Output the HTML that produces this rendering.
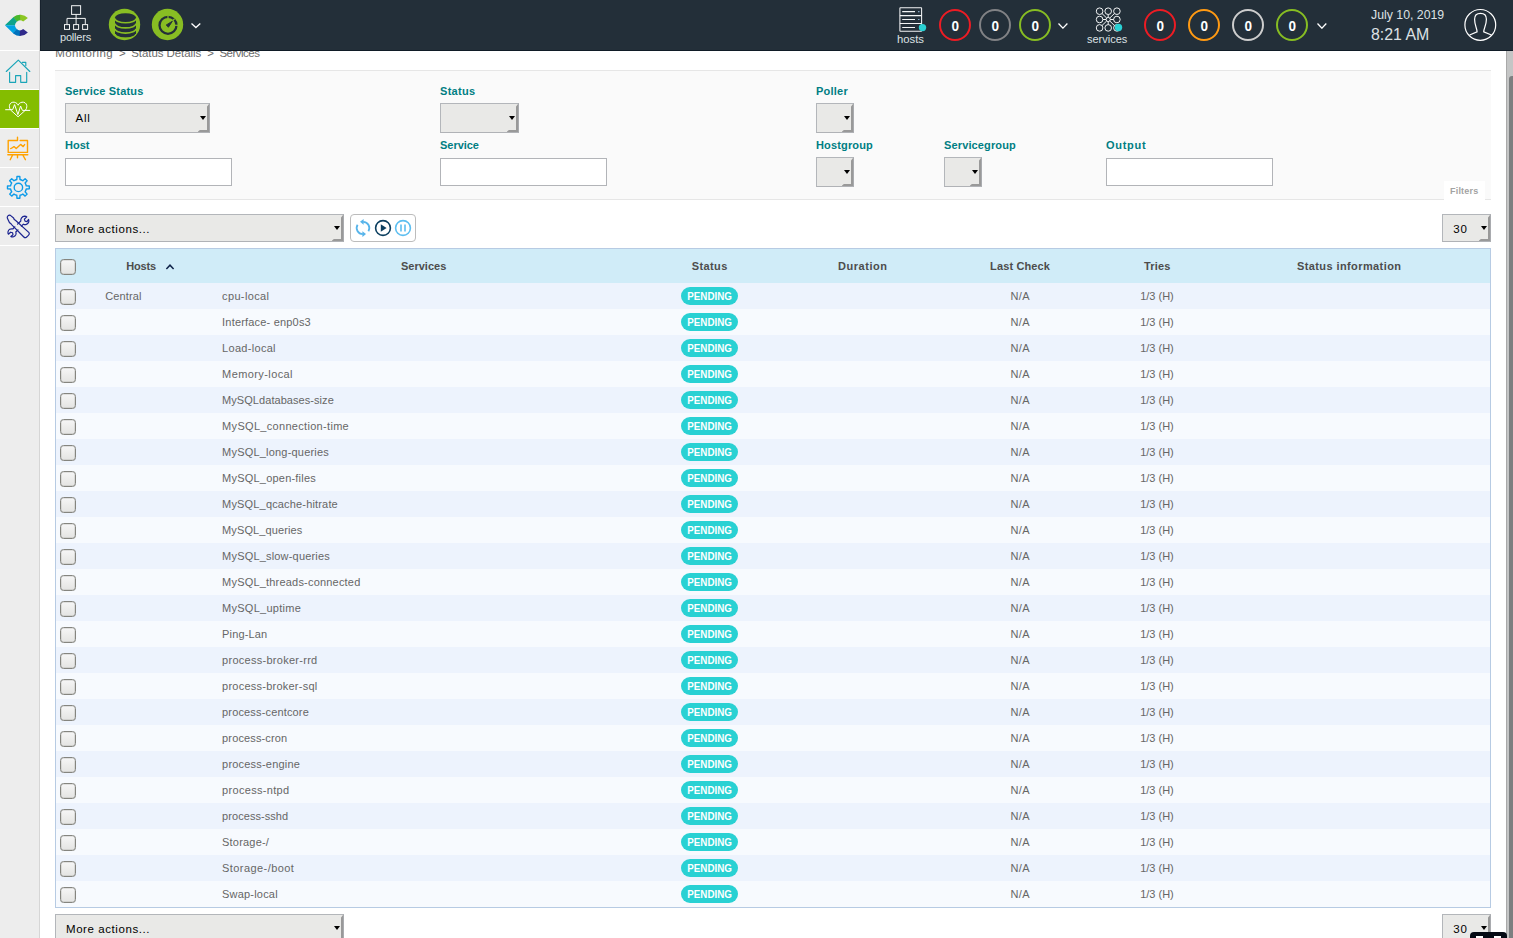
<!DOCTYPE html>
<html><head><meta charset="utf-8"><title>Centreon</title>
<style>
*{box-sizing:border-box;margin:0;padding:0}
html,body{width:1513px;height:938px;overflow:hidden;background:#fff;font-family:"Liberation Sans",sans-serif;font-size:11px;color:#666}
.abs{position:absolute}
#side{position:absolute;left:0;top:0;width:40px;height:938px;background:#ededed;border-right:1px solid #d6d6d6}
#side .sep{position:absolute;left:0;width:39px;height:1px;background:#fff}
#side .act{position:absolute;left:0;top:90px;width:39px;height:38px;background:#84bd00}
#top{position:absolute;left:40px;top:0;width:1473px;height:51px;background:#232f39;border-bottom:1px solid #101b26;border-left:1px solid #17222d}
#top .t{position:absolute;color:#dde1e4;font-size:11px;white-space:nowrap;line-height:12px}
.cnt{position:absolute;top:9px;width:32px;height:32px;border-radius:50%;border:2px solid #fff;color:#fff;font-weight:bold;font-size:15px;line-height:29px;text-align:center}
.cnt b{display:inline-block;transform:scaleX(.9)}
#main{position:absolute;left:40px;top:50px;width:1466px;height:888px;overflow:hidden}
.bc{position:absolute;top:45.5px;font-size:11.5px;line-height:14px;color:#6a6a6a;white-space:nowrap}
.fbox{position:absolute;left:55px;top:70px;width:1436px;height:130px;background:#fafafa;border-top:1px solid #e6e6e6;border-bottom:1px solid #e6e6e6}
.lab{position:absolute;font-weight:bold;font-size:11px;color:#007e83;line-height:13px;white-space:nowrap;letter-spacing:.15px}
.inp{position:absolute;background:#fff;border:1px solid #b2b4b8}
.sel{position:absolute;background:#e9e9e7;border:1px solid #b3b6ba;border-right-color:#a9abaf;border-bottom-color:#b0b2b6}
.sel i{position:absolute;display:block}
.sel .sr{right:0;top:0;bottom:0;width:2.4px;background:#999;clip-path:polygon(100% 0,100% 100%,0 100%,0 3px)}
.sel .sb{right:0;bottom:0;width:11.5px;height:2.4px;background:#999;clip-path:polygon(3px 0,100% 0,100% 100%,0 100%)}
.sel .sc{display:none}
.sel .sa{right:2.7px;top:50%;margin-top:-2px;width:0;height:0;border-left:3.5px solid transparent;border-right:3.5px solid transparent;border-top:4px solid #000}
.tbl{position:absolute;left:55px;top:248px;width:1436px;height:660px;border:1px solid #b7cbe3;background:#f7f9fe}
.th{position:absolute;left:0;top:0;width:1434px;height:34px;background:#d0ecf8}
.th span{position:absolute;top:0;line-height:34px;font-weight:bold;font-size:11px;color:#4d4d4d;white-space:nowrap}
.row{position:absolute;left:0;width:1434px;height:26px;line-height:26px;white-space:nowrap}
.row.o{background:#edf3fd}
.row.e{background:#f7fafe}
.row span{position:absolute;top:0;font-size:11px;color:#666}
.row .c{transform:translateX(-50%)}
.cb{position:absolute;left:4px;width:16px;height:16px;border:1px solid #85857f;border-radius:3.5px;background:linear-gradient(#f6f6f6,#e4e4e2);box-shadow:inset 0 0 0 .5px rgba(120,120,115,.35)}
.badge{position:absolute;left:625px;top:4px;width:57px;height:18px;border-radius:9px;background:#29d1d3;color:#fff;font-weight:bold;font-size:10.8px;line-height:18px;text-align:center}
.badge b{display:inline-block;transform:scaleX(0.9067)}
</style></head><body>

<div id="side"><div class="act"></div>
<div class="sep" style="top:50px"></div>
<div class="sep" style="top:89px"></div>
<div class="sep" style="top:128px"></div>
<div class="sep" style="top:167px"></div>
<div class="sep" style="top:206px"></div>
<div class="sep" style="top:245px"></div>
<svg class="abs" style="left:0;top:0" width="40" height="50" viewBox="0 0 40 50"><defs><clipPath id="lc"><path d="M27.85 18.07 A10.6 10.6 0 0 0 13.57 16.95 L4.9 25.3 L13.57 33.65 A10.6 10.6 0 0 0 27.85 32.53 L23.18 29.11 A4.9 4.9 0 1 1 23.18 21.49 Z"/></clipPath></defs><g clip-path="url(#lc)"><path d="M20.1 25.3 L19.05 -4.68 L46.08 10.30 Z" fill="#8cc623"/><path d="M20.1 25.3 L0.03 3.01 L20.10 -4.70 Z" fill="#4ab82c"/><path d="M20.1 25.3 L-9.90 25.30 L0.82 2.32 Z" fill="#0ea38a"/><path d="M20.1 25.3 L0.82 48.28 L-9.90 25.04 Z" fill="#00a3e2"/><path d="M20.1 25.3 L20.10 55.30 L0.03 47.59 Z" fill="#0072bc"/><path d="M20.1 25.3 L46.08 40.30 L19.05 55.28 Z" fill="#2f2a8b"/></g></svg>
<svg class="abs" style="left:0;top:50px" width="40" height="200" viewBox="0 50 40 200" fill="none" stroke-linecap="round" stroke-linejoin="round"><g stroke="#1aa5b8" stroke-width="1.15"><path d="M6.3 71.5 L18.3 60.2 L29.8 71.5"/><path d="M22.3 62.3 H25.8 V65.7"/><path d="M9.6 72.2 V82.3 H15.6 V75.6 H20.7 V82.3 H26.7 V72.2"/></g><g stroke="#ffffff" stroke-width="1"><path d="M18.1 104.8 C16.8 102.6 14.6 102 12.8 102.2 C10.2 102.6 9.2 104.8 9.4 106.8 C9.5 108.2 10 109.2 10.6 110 L18.1 116.8 L25.6 110 C26.2 109.2 26.7 108.2 26.8 106.8 C27 104.8 26 102.6 23.4 102.2 C21.6 102 19.4 102.6 18.1 104.8 Z"/><path d="M5.6 109.7 H12.6 L14.6 104.6 L17.9 114.6 L20.6 106 L22.4 110.4 H29.8"/></g><g stroke="#ffa200" stroke-width="1.4"><path d="M17.5 137.2 V140.5 H8.2 V152.4 H27.5 V140.5 H20.2"/><path d="M10.6 148.6 C12 148.6 13 147.2 14 146.6 L16.2 148.6 L20.6 144.4 L23.2 146.6 L24.6 144.6"/><path d="M7.8 154.7 H27.8 M12.6 155 L10.2 159.7 M17.5 155 V157.8 M22.8 155 L25.4 159.7"/></g><path d="M16.81 179.56 L16.96 176.49 L19.84 176.49 L19.99 179.56 A8.0 8.0 0 0 1 22.82 180.73 L25.10 178.67 L27.13 180.70 L25.07 182.98 A8.0 8.0 0 0 1 26.24 185.81 L29.31 185.96 L29.31 188.84 L26.24 188.99 A8.0 8.0 0 0 1 25.07 191.82 L27.13 194.10 L25.10 196.13 L22.82 194.07 A8.0 8.0 0 0 1 19.99 195.24 L19.84 198.31 L16.96 198.31 L16.81 195.24 A8.0 8.0 0 0 1 13.98 194.07 L11.70 196.13 L9.67 194.10 L11.73 191.82 A8.0 8.0 0 0 1 10.56 188.99 L7.49 188.84 L7.49 185.96 L10.56 185.81 A8.0 8.0 0 0 1 11.73 182.98 L9.67 180.70 L11.70 178.67 L13.98 180.73 A8.0 8.0 0 0 1 16.81 179.56 Z" fill="none" stroke="#0d9be8" stroke-width="1.4" stroke-linejoin="round"/><circle cx="18.4" cy="187.4" r="4.2" fill="none" stroke="#0d9be8" stroke-width="1.4"/><g stroke="#1c2490" stroke-width="1.2"><path d="M7.4 218.2 C6.6 216.6 8.6 214.6 10.4 215.4 L13.6 218 C13.9 219.2 14.3 219.8 15.4 220.2 L29 232.6 C29.8 233.6 29.2 234.6 28.4 235.4 L26.4 237.2 C25.6 237.8 24.6 237.8 23.8 237 L11.6 224.6 C11 223.4 10.4 223 9.4 222.6 Z"/><path d="M17.6 224.2 L20.8 221 C20.4 218.6 22 216.4 24.6 216.2 C25.6 216.2 26.4 216.4 26.8 216.8 L24.4 219.2 L25 221.2 L27 221.6 L28.6 219.4 C29.4 221.2 28.6 223.6 26.4 224.4 C25.4 224.8 24.2 224.6 23.4 224.2 L21.4 226.2"/><path d="M14.8 226.8 L12.8 229 C10.6 228.4 8.4 229.6 8 231.8 C7.8 232.8 8 233.6 8.4 234.2 L10.6 232.2 L12.6 232.8 L13 234.8 L10.8 236.4 C12.4 237.4 14.8 236.8 15.8 234.8 C16.2 233.8 16.2 232.8 15.8 232 L18 229.8"/></g></svg>
</div>
<div class="bc" style="left:55.2px;letter-spacing:0.425px">Monitoring</div>
<div class="bc" style="left:119px;letter-spacing:0px">&gt;</div>
<div class="bc" style="left:131.2px;letter-spacing:-0.063px">Status Details</div>
<div class="bc" style="left:207.2px;letter-spacing:0px">&gt;</div>
<div class="bc" style="left:219.4px;letter-spacing:-0.513px">Services</div>
<div class="fbox"></div>
<div class="lab" style="left:65px;top:85px;letter-spacing:0.194px">Service Status</div>
<div class="sel" style="left:65px;top:103px;width:145px;height:30px"><span style="position:absolute;left:9.6px;top:7.02px;line-height:14px;font-size:11.5px;color:#000;letter-spacing:0.752px;white-space:nowrap">All</span><i class="sr"></i><i class="sb"></i><i class="sc"></i><i class="sa"></i></div>
<div class="lab" style="left:440px;top:85px;letter-spacing:0.295px">Status</div>
<div class="sel" style="left:440px;top:103px;width:79px;height:30px"><i class="sr"></i><i class="sb"></i><i class="sc"></i><i class="sa"></i></div>
<div class="lab" style="left:816px;top:85px;letter-spacing:0.221px">Poller</div>
<div class="sel" style="left:816px;top:103px;width:38px;height:30px"><i class="sr"></i><i class="sb"></i><i class="sc"></i><i class="sa"></i></div>
<div class="lab" style="left:65px;top:139px;letter-spacing:0.021px">Host</div>
<div class="inp" style="left:65px;top:158px;width:167px;height:28px"></div>
<div class="lab" style="left:440px;top:139px;letter-spacing:-0.031px">Service</div>
<div class="inp" style="left:440px;top:158px;width:167px;height:28px"></div>
<div class="lab" style="left:816px;top:139px;letter-spacing:0.151px">Hostgroup</div>
<div class="sel" style="left:816px;top:157px;width:38px;height:30px"><i class="sr"></i><i class="sb"></i><i class="sc"></i><i class="sa"></i></div>
<div class="lab" style="left:944px;top:139px;letter-spacing:0.132px">Servicegroup</div>
<div class="sel" style="left:944px;top:157px;width:38px;height:30px"><i class="sr"></i><i class="sb"></i><i class="sc"></i><i class="sa"></i></div>
<div class="lab" style="left:1106px;top:139px;letter-spacing:0.714px">Output</div>
<div class="inp" style="left:1106px;top:158px;width:167px;height:28px"></div>
<div class="abs" style="left:1444px;top:181px;width:41px;height:19px;background:#fff"></div>
<div class="abs" style="left:1450px;top:185px;font-size:9px;font-weight:bold;color:#a3a3a3;line-height:12px;letter-spacing:.2px">Filters</div>
<div class="sel" style="left:55px;top:214px;width:289px;height:28px"><span style="position:absolute;left:10.0px;top:7.02px;line-height:14px;font-size:11.5px;color:#000;letter-spacing:0.574px;white-space:nowrap">More actions...</span><i class="sr"></i><i class="sb"></i><i class="sc"></i><i class="sa"></i></div>
<div class="abs" style="left:350px;top:214px;width:66px;height:28px;border:1px solid #bcbcbc;border-radius:4px;background:#fff"></div>
<svg class="abs" style="left:350px;top:214px" width="66" height="28" viewBox="350 214 66 28" fill="none">
<g stroke="#57b4ea" stroke-width="1.8">
<path d="M363.2 221.9 A6.1 6.1 0 0 1 368.4 231.2"/><path d="M362.8 234.1 A6.1 6.1 0 0 1 357.6 224.8"/></g>
<path d="M360 221.8 L363.6 218.9 V224.7 Z" fill="#57b4ea"/><path d="M366 234.1 L362.4 231.2 V237 Z" fill="#57b4ea"/>
<circle cx="383" cy="228" r="7.4" stroke="#0b3e5f" stroke-width="1.6"/><path d="M380.8 224.2 L386.6 228 L380.8 231.8 Z" fill="#0b3e5f"/>
<circle cx="403" cy="228" r="7.4" stroke="#5cbef0" stroke-width="1.6"/><path d="M401 224.6 V231.4 M405 224.6 V231.4" stroke="#5cbef0" stroke-width="1.6"/>
</svg>
<div class="sel" style="left:1442px;top:214px;width:49px;height:28px"><span style="position:absolute;left:10.2px;top:7.02px;line-height:14px;font-size:11.5px;color:#000;letter-spacing:0.819px;white-space:nowrap">30</span><i class="sr"></i><i class="sb"></i><i class="sc"></i><i class="sa"></i></div>
<div class="tbl"><div class="th"><div class="cb" style="top:10px"></div>
<span style="left:70.2px;letter-spacing:-0.141px">Hosts</span>
<span style="left:345.0px;letter-spacing:-0.002px">Services</span>
<span style="left:635.8px;letter-spacing:0.375px">Status</span>
<span style="left:782.1px;letter-spacing:0.512px">Duration</span>
<span style="left:934.1px;letter-spacing:0.131px">Last Check</span>
<span style="left:1088.0px;letter-spacing:0.149px">Tries</span>
<span style="left:1240.9px;letter-spacing:0.407px">Status information</span>
<svg class="abs" style="left:109px;top:14px" width="10" height="8" viewBox="0 0 10 8"><path d="M1.4 6 L5 2.2 L8.6 6" fill="none" stroke="#10244a" stroke-width="1.5"/></svg>
</div>
<div class="row o" style="top:34px"><div class="cb" style="top:6px"></div><span style="left:49.2px;letter-spacing:0.122px">Central</span><span style="left:166.1px;letter-spacing:0.346px">cpu-local</span><div class="badge"><b>PENDING</b></div><span style="left:954.6px;letter-spacing:0.328px">N/A</span><span style="left:1084.2px;letter-spacing:-0.004px">1/3 (H)</span></div>
<div class="row e" style="top:60px"><div class="cb" style="top:6px"></div><span style="left:166.1px;letter-spacing:0.188px">Interface- enp0s3</span><div class="badge"><b>PENDING</b></div><span style="left:954.6px;letter-spacing:0.328px">N/A</span><span style="left:1084.2px;letter-spacing:-0.004px">1/3 (H)</span></div>
<div class="row o" style="top:86px"><div class="cb" style="top:6px"></div><span style="left:166.1px;letter-spacing:0.302px">Load-local</span><div class="badge"><b>PENDING</b></div><span style="left:954.6px;letter-spacing:0.328px">N/A</span><span style="left:1084.2px;letter-spacing:-0.004px">1/3 (H)</span></div>
<div class="row e" style="top:112px"><div class="cb" style="top:6px"></div><span style="left:166.1px;letter-spacing:0.4px">Memory-local</span><div class="badge"><b>PENDING</b></div><span style="left:954.6px;letter-spacing:0.328px">N/A</span><span style="left:1084.2px;letter-spacing:-0.004px">1/3 (H)</span></div>
<div class="row o" style="top:138px"><div class="cb" style="top:6px"></div><span style="left:166.1px;letter-spacing:0.055px">MySQLdatabases-size</span><div class="badge"><b>PENDING</b></div><span style="left:954.6px;letter-spacing:0.328px">N/A</span><span style="left:1084.2px;letter-spacing:-0.004px">1/3 (H)</span></div>
<div class="row e" style="top:164px"><div class="cb" style="top:6px"></div><span style="left:166.1px;letter-spacing:0.31px">MySQL_connection-time</span><div class="badge"><b>PENDING</b></div><span style="left:954.6px;letter-spacing:0.328px">N/A</span><span style="left:1084.2px;letter-spacing:-0.004px">1/3 (H)</span></div>
<div class="row o" style="top:190px"><div class="cb" style="top:6px"></div><span style="left:166.1px;letter-spacing:0.196px">MySQL_long-queries</span><div class="badge"><b>PENDING</b></div><span style="left:954.6px;letter-spacing:0.328px">N/A</span><span style="left:1084.2px;letter-spacing:-0.004px">1/3 (H)</span></div>
<div class="row e" style="top:216px"><div class="cb" style="top:6px"></div><span style="left:166.1px;letter-spacing:0.211px">MySQL_open-files</span><div class="badge"><b>PENDING</b></div><span style="left:954.6px;letter-spacing:0.328px">N/A</span><span style="left:1084.2px;letter-spacing:-0.004px">1/3 (H)</span></div>
<div class="row o" style="top:242px"><div class="cb" style="top:6px"></div><span style="left:166.1px;letter-spacing:0.165px">MySQL_qcache-hitrate</span><div class="badge"><b>PENDING</b></div><span style="left:954.6px;letter-spacing:0.328px">N/A</span><span style="left:1084.2px;letter-spacing:-0.004px">1/3 (H)</span></div>
<div class="row e" style="top:268px"><div class="cb" style="top:6px"></div><span style="left:166.1px;letter-spacing:0.099px">MySQL_queries</span><div class="badge"><b>PENDING</b></div><span style="left:954.6px;letter-spacing:0.328px">N/A</span><span style="left:1084.2px;letter-spacing:-0.004px">1/3 (H)</span></div>
<div class="row o" style="top:294px"><div class="cb" style="top:6px"></div><span style="left:166.1px;letter-spacing:0.185px">MySQL_slow-queries</span><div class="badge"><b>PENDING</b></div><span style="left:954.6px;letter-spacing:0.328px">N/A</span><span style="left:1084.2px;letter-spacing:-0.004px">1/3 (H)</span></div>
<div class="row e" style="top:320px"><div class="cb" style="top:6px"></div><span style="left:166.1px;letter-spacing:0.195px">MySQL_threads-connected</span><div class="badge"><b>PENDING</b></div><span style="left:954.6px;letter-spacing:0.328px">N/A</span><span style="left:1084.2px;letter-spacing:-0.004px">1/3 (H)</span></div>
<div class="row o" style="top:346px"><div class="cb" style="top:6px"></div><span style="left:166.1px;letter-spacing:0.26px">MySQL_uptime</span><div class="badge"><b>PENDING</b></div><span style="left:954.6px;letter-spacing:0.328px">N/A</span><span style="left:1084.2px;letter-spacing:-0.004px">1/3 (H)</span></div>
<div class="row e" style="top:372px"><div class="cb" style="top:6px"></div><span style="left:166.1px;letter-spacing:0.148px">Ping-Lan</span><div class="badge"><b>PENDING</b></div><span style="left:954.6px;letter-spacing:0.328px">N/A</span><span style="left:1084.2px;letter-spacing:-0.004px">1/3 (H)</span></div>
<div class="row o" style="top:398px"><div class="cb" style="top:6px"></div><span style="left:166.1px;letter-spacing:0.272px">process-broker-rrd</span><div class="badge"><b>PENDING</b></div><span style="left:954.6px;letter-spacing:0.328px">N/A</span><span style="left:1084.2px;letter-spacing:-0.004px">1/3 (H)</span></div>
<div class="row e" style="top:424px"><div class="cb" style="top:6px"></div><span style="left:166.1px;letter-spacing:0.236px">process-broker-sql</span><div class="badge"><b>PENDING</b></div><span style="left:954.6px;letter-spacing:0.328px">N/A</span><span style="left:1084.2px;letter-spacing:-0.004px">1/3 (H)</span></div>
<div class="row o" style="top:450px"><div class="cb" style="top:6px"></div><span style="left:166.1px;letter-spacing:0.153px">process-centcore</span><div class="badge"><b>PENDING</b></div><span style="left:954.6px;letter-spacing:0.328px">N/A</span><span style="left:1084.2px;letter-spacing:-0.004px">1/3 (H)</span></div>
<div class="row e" style="top:476px"><div class="cb" style="top:6px"></div><span style="left:166.1px;letter-spacing:0.137px">process-cron</span><div class="badge"><b>PENDING</b></div><span style="left:954.6px;letter-spacing:0.328px">N/A</span><span style="left:1084.2px;letter-spacing:-0.004px">1/3 (H)</span></div>
<div class="row o" style="top:502px"><div class="cb" style="top:6px"></div><span style="left:166.1px;letter-spacing:0.196px">process-engine</span><div class="badge"><b>PENDING</b></div><span style="left:954.6px;letter-spacing:0.328px">N/A</span><span style="left:1084.2px;letter-spacing:-0.004px">1/3 (H)</span></div>
<div class="row e" style="top:528px"><div class="cb" style="top:6px"></div><span style="left:166.1px;letter-spacing:0.316px">process-ntpd</span><div class="badge"><b>PENDING</b></div><span style="left:954.6px;letter-spacing:0.328px">N/A</span><span style="left:1084.2px;letter-spacing:-0.004px">1/3 (H)</span></div>
<div class="row o" style="top:554px"><div class="cb" style="top:6px"></div><span style="left:166.1px;letter-spacing:0.06px">process-sshd</span><div class="badge"><b>PENDING</b></div><span style="left:954.6px;letter-spacing:0.328px">N/A</span><span style="left:1084.2px;letter-spacing:-0.004px">1/3 (H)</span></div>
<div class="row e" style="top:580px"><div class="cb" style="top:6px"></div><span style="left:166.1px;letter-spacing:0.19px">Storage-/</span><div class="badge"><b>PENDING</b></div><span style="left:954.6px;letter-spacing:0.328px">N/A</span><span style="left:1084.2px;letter-spacing:-0.004px">1/3 (H)</span></div>
<div class="row o" style="top:606px"><div class="cb" style="top:6px"></div><span style="left:166.1px;letter-spacing:0.423px">Storage-/boot</span><div class="badge"><b>PENDING</b></div><span style="left:954.6px;letter-spacing:0.328px">N/A</span><span style="left:1084.2px;letter-spacing:-0.004px">1/3 (H)</span></div>
<div class="row e" style="top:632px"><div class="cb" style="top:6px"></div><span style="left:166.1px;letter-spacing:0.188px">Swap-local</span><div class="badge"><b>PENDING</b></div><span style="left:954.6px;letter-spacing:0.328px">N/A</span><span style="left:1084.2px;letter-spacing:-0.004px">1/3 (H)</span></div>
</div>
<div class="sel" style="left:55px;top:914px;width:289px;height:28px"><span style="position:absolute;left:10.0px;top:7.02px;line-height:14px;font-size:11.5px;color:#000;letter-spacing:0.574px;white-space:nowrap">More actions...</span><i class="sr"></i><i class="sb"></i><i class="sc"></i><i class="sa"></i></div>
<div class="sel" style="left:1442px;top:914px;width:49px;height:28px"><span style="position:absolute;left:10.2px;top:7.02px;line-height:14px;font-size:11.5px;color:#000;letter-spacing:0.819px;white-space:nowrap">30</span><i class="sr"></i><i class="sb"></i><i class="sc"></i><i class="sa"></i></div>
<div id="top"></div>
<svg class="abs" style="left:60px;top:0" width="34" height="32" viewBox="60 0 34 32" fill="none" stroke="#f2f4f5" stroke-width="1">
<rect x="71.6" y="5.7" width="9" height="8.7"/><path d="M76.1 14.4 V24.4 M67 24.4 V18.4 H85.3 V24.4"/>
<rect x="64.5" y="24.6" width="5" height="4.8"/><rect x="73.6" y="24.6" width="5" height="4.8"/><rect x="82.6" y="24.6" width="5" height="4.8"/></svg>
<div class="abs" style="left:60px;top:31px;color:#dde1e4;font-size:11px;line-height:12px;letter-spacing:-.2px">pollers</div>
<svg class="abs" style="left:108px;top:8px" width="34" height="34" viewBox="108 8 34 34">
<defs><clipPath id="dbc"><circle cx="124.5" cy="24.5" r="15.7"/></clipPath></defs>
<circle cx="124.5" cy="24.5" r="15.7" fill="#88bd23"/>
<g clip-path="url(#dbc)"><path d="M115 17.6 A10.5 4.3 0 0 1 136 17.6 V33.4 A10.5 4.3 0 0 1 115 33.4 Z" fill="#232f39"/>
<g fill="none" stroke="#88bd23" stroke-width="1.6"><path d="M115 18.4 A10.5 4.3 0 0 0 136 18.4"/><path d="M115 23.6 A10.5 4.3 0 0 0 136 23.6"/><path d="M115 28.8 A10.5 4.3 0 0 0 136 28.8"/><path d="M115 33.9 A10.5 4.3 0 0 0 136 33.9"/></g></g></svg>
<svg class="abs" style="left:151px;top:8px" width="34" height="34" viewBox="151 8 34 34">
<circle cx="167.5" cy="24.5" r="15.7" fill="#88bd23"/>
<circle cx="168" cy="25.3" r="8.5" fill="none" stroke="#232f39" stroke-width="2.3"/>
<g stroke="#88bd23" stroke-width="1.2"><path d="M168 15 V18.5"/><path d="M174.8 18.6 L172.4 20.9"/><path d="M178.2 25.3 H174.6"/></g>
<path d="M166.2 25 L172.4 21.2 L168.4 27.2 Z" fill="#232f39" stroke="#232f39" stroke-width=".9" stroke-linejoin="round"/></svg>
<svg class="abs" style="left:189.5px;top:21.9px" width="11.8" height="7.3" viewBox="-1 -1 11.8 7.3"><path d="M0.5 0.5 L4.90 4.60 L9.30 0.5" fill="none" stroke="#fff" stroke-width="1.3"/></svg>
<svg class="abs" style="left:896px;top:4px" width="34" height="32" viewBox="896 4 34 32" fill="none" stroke="#f2f4f5" stroke-width="1.05">
<rect x="899.9" y="7.8" width="21.7" height="23.4" rx=".5"/><path d="M899.9 15.6 H921.6 M899.9 23.5 H921.6"/>
<path d="M902.2 11.6 H915 M902.2 19.5 H915 M902.2 27.5 H915" stroke-width="1.1"/>
<path d="M918.2 11.6 H919.4 M918.2 19.5 H919.4" stroke="#9fc4e6" stroke-width="1.1"/>
<circle cx="922.5" cy="27.6" r="3.7" fill="#2ad1d4" stroke="none"/></svg>
<div class="abs" style="left:897px;top:33px;color:#dde1e4;font-size:11.3px;line-height:12px">hosts</div>
<div class="cnt" style="left:939px;border-color:#ed1c24"><b>0</b></div>
<div class="cnt" style="left:979px;border-color:#818285"><b>0</b></div>
<div class="cnt" style="left:1019px;border-color:#87bd23"><b>0</b></div>
<svg class="abs" style="left:1056.5px;top:21.6px" width="11.9" height="7.8" viewBox="-1 -1 11.9 7.8"><path d="M0.5 0.5 L4.95 5.10 L9.40 0.5" fill="none" stroke="#fff" stroke-width="1.3"/></svg>
<svg class="abs" style="left:1092px;top:4px" width="34" height="32" viewBox="1092 4 34 32" fill="none" stroke="#f2f4f5" stroke-width="1"><circle cx="1099.6" cy="11.2" r="3.3"/><path d="M1106.69 18.04 L1101.97 13.49"/><circle cx="1099.6" cy="19.5" r="3.3"/><path d="M1106.10 19.50 L1102.90 19.50"/><circle cx="1099.6" cy="27.9" r="3.3"/><path d="M1106.70 20.97 L1101.96 25.59"/><circle cx="1108.2" cy="11.2" r="3.3"/><path d="M1108.20 17.40 L1108.20 14.50"/><circle cx="1108.2" cy="19.5" r="2.1"/><circle cx="1108.2" cy="27.9" r="3.3"/><path d="M1108.20 21.60 L1108.20 24.60"/><circle cx="1116.9" cy="11.2" r="3.3"/><path d="M1109.72 18.05 L1114.51 13.48"/><circle cx="1116.9" cy="19.5" r="3.3"/><path d="M1110.30 19.50 L1113.60 19.50"/><circle cx="1116.9" cy="27.9" r="3.3"/><path d="M1109.71 20.96 L1114.53 25.61"/><circle cx="1118.5" cy="27.5" r="3.7" fill="#2ad1d4" stroke="none"/></svg>
<div class="abs" style="left:1087px;top:33px;color:#dde1e4;font-size:11px;line-height:12px">services</div>
<div class="cnt" style="left:1144px;border-color:#ed1c24"><b>0</b></div>
<div class="cnt" style="left:1188px;border-color:#ff9a13"><b>0</b></div>
<div class="cnt" style="left:1232px;border-color:#cdcdcd"><b>0</b></div>
<div class="cnt" style="left:1276px;border-color:#87bd23"><b>0</b></div>
<svg class="abs" style="left:1315.6px;top:21.5px" width="11.8" height="7.9" viewBox="-1 -1 11.8 7.9"><path d="M0.5 0.5 L4.90 5.20 L9.30 0.5" fill="none" stroke="#fff" stroke-width="1.3"/></svg>
<div class="abs" style="left:1370.6px;top:8px;color:#dde1e4;font-size:13px;line-height:14px;white-space:nowrap;transform-origin:0 0;transform:scaleX(0.9462)">July 10, 2019</div>
<div class="abs" style="left:1370.6px;top:25px;color:#dde1e4;font-size:17px;line-height:20px;white-space:nowrap;transform-origin:0 0;transform:scaleX(0.9333)">8:21 AM</div>
<svg class="abs" style="left:1463px;top:8px" width="34" height="34" viewBox="1463 8 34 34" fill="none" stroke="#fff" stroke-width="1.2">
<circle cx="1480.3" cy="24.9" r="15.4"/>
<path d="M1469.6 35 L1477.1 31.9 C1477.1 28.6 1474.6 25.4 1474.6 19.2 C1474.6 15.2 1477 13.4 1480.5 13.4 C1484 13.4 1486.4 15.2 1486.4 19.2 C1486.4 25.4 1483.7 28.6 1483.7 31.9 L1491.4 35"/></svg>
<div class="abs" style="left:1506px;top:51px;width:7px;height:887px;background:#c4c5c5;border-left:1px solid #a9a9a9"></div>
<div class="abs" style="left:1509px;top:76px;width:8px;height:900px;background:#7c7f80;border-radius:3px"></div>
<div class="abs" style="left:1470px;top:932px;width:37px;height:12px;background:#050a14;border-radius:4px"></div>
<div class="abs" style="left:1476px;top:936px;width:7px;height:4px;background:#fff"></div><div class="abs" style="left:1494px;top:936px;width:7px;height:4px;background:#fff"></div>
</body></html>
